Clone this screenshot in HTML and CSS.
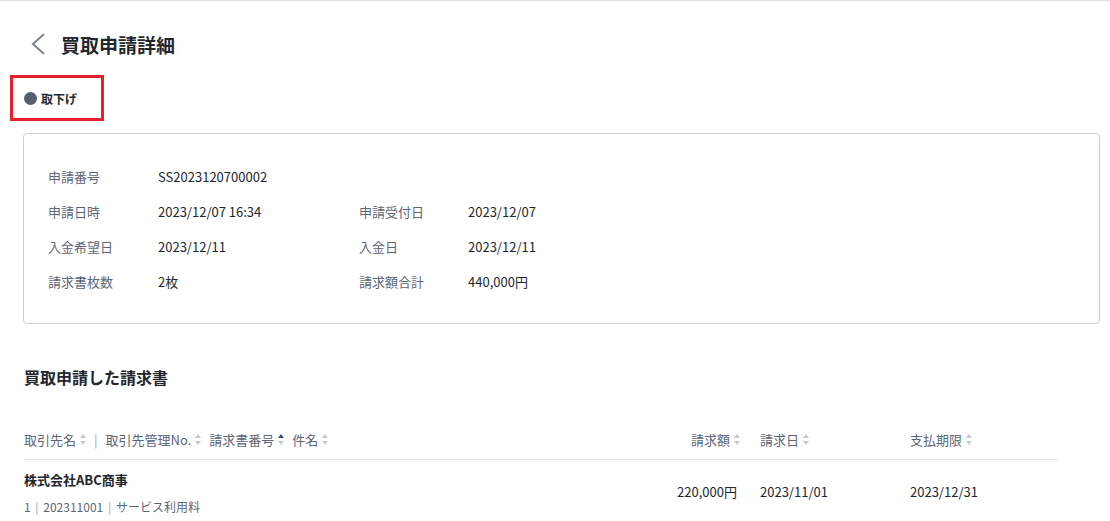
FILE: index.html
```html
<!DOCTYPE html>
<html lang="ja">
<head>
  <meta charset="UTF-8">
  <title>買取申請詳細</title>
  <link rel="stylesheet" href="styles.css">
</head>
<body>

  <div class="page">
    <div class="page-header">
      <a class="back" href="#">
        <svg width="16" height="24" viewBox="0 0 16 24"><polyline points="13,2 2,12 13,22" fill="none" stroke="#7b8695" stroke-width="2"/></svg>
      </a>
      <h1>買取申請詳細</h1>
    </div>

    <div class="status-mark">
      <span class="dot"></span>
      <span class="status-text">取下げ</span>
    </div>

    <div class="card">
      <div class="info-grid">
        <div class="label">申請番号</div>
        <div class="value">SS2023120700002</div>
        <div class="label"></div>
        <div class="value"></div>

        <div class="label">申請日時</div>
        <div class="value">2023/12/07 16:34</div>
        <div class="label">申請受付日</div>
        <div class="value">2023/12/07</div>

        <div class="label">入金希望日</div>
        <div class="value">2023/12/11</div>
        <div class="label">入金日</div>
        <div class="value">2023/12/11</div>

        <div class="label">請求書枚数</div>
        <div class="value">2枚</div>
        <div class="label">請求額合計</div>
        <div class="value">440,000円</div>
      </div>
    </div>

    <h2>買取申請した請求書</h2>

    <div class="invoice-table">
      <div class="row head">
        <div class="cell">
          <span class="sort">取引先名 <svg class="arrows" width="6" height="11" viewBox="0 0 6 11"><polygon points="0,4 3,0 6,4"/><polygon points="0,7 3,11 6,7"/></svg></span>
          <span class="sep">|</span>
          <span class="sort">取引先管理No. <svg class="arrows" width="6" height="11" viewBox="0 0 6 11"><polygon points="0,4 3,0 6,4"/><polygon points="0,7 3,11 6,7"/></svg></span>
          <span class="sort">請求書番号 <svg class="arrows" width="6" height="11" viewBox="0 0 6 11"><polygon class="on" points="0,4 3,0 6,4"/><polygon points="0,7 3,11 6,7"/></svg></span>
          <span class="sort">件名 <svg class="arrows" width="6" height="11" viewBox="0 0 6 11"><polygon points="0,4 3,0 6,4"/><polygon points="0,7 3,11 6,7"/></svg></span>
        </div>
        <div class="cell num">
          <span class="sort">請求額 <svg class="arrows" width="6" height="11" viewBox="0 0 6 11"><polygon points="0,4 3,0 6,4"/><polygon points="0,7 3,11 6,7"/></svg></span>
        </div>
        <div class="cell date">
          <span class="sort">請求日 <svg class="arrows" width="6" height="11" viewBox="0 0 6 11"><polygon points="0,4 3,0 6,4"/><polygon points="0,7 3,11 6,7"/></svg></span>
        </div>
        <div class="cell date">
          <span class="sort">支払期限 <svg class="arrows" width="6" height="11" viewBox="0 0 6 11"><polygon points="0,4 3,0 6,4"/><polygon points="0,7 3,11 6,7"/></svg></span>
        </div>
      </div>

      <div class="row item">
        <div class="cell">
          <div class="company">株式会社ABC商事</div>
          <div class="sub">1 <span class="sep">|</span> 202311001 <span class="sep">|</span> サービス利用料</div>
        </div>
        <div class="cell num">220,000円</div>
        <div class="cell date">2023/11/01</div>
        <div class="cell date">2023/12/31</div>
      </div>
    </div>
  </div>

</body>
</html>
```

FILE: styles.css
```css
:root {
  --text: #22262d;
  --muted: #5d6676;
  --line: #dde1e8;
  --card-border: #c9ced7;
}

body {
  margin: 0;
  font-family: "Noto Sans CJK JP", "Noto Sans", sans-serif;
  color: var(--text);
  background: #ffffff;
  border-top: 1px solid var(--line);
}

.page {
  padding: 0 10px 0 23px;
}

.page-header {
  display: flex;
  align-items: center;
  height: 30px;
  margin-top: 28px;
}

.back {
  display: flex;
  margin-left: 8px;
  margin-right: 14px;
}

h1 {
  margin: 0;
  font-size: 19px;
  font-weight: 700;
}

.status-mark {
  display: inline-flex;
  align-items: center;
  gap: 4px;
  box-sizing: border-box;
  width: 94px;
  height: 46px;
  margin: 16px 0 0 -13px;
  padding-left: 11px;
  border: 3px solid #e8202a;
}

.dot {
  width: 13px;
  height: 13px;
  border-radius: 50%;
  background: #535e6e;
}

.status-text {
  font-size: 12px;
  font-weight: 700;
}

.card {
  margin-top: 12px;
  border: 1px solid var(--card-border);
  border-radius: 4px;
  padding: 25px 24px 24px;
}

.info-grid {
  display: grid;
  grid-template-columns: 110px 201px 109px 1fr;
  grid-auto-rows: 35px;
  align-items: center;
  font-size: 13px;
}

.label {
  color: var(--muted);
}

.value {
  color: var(--text);
}

h2 {
  margin: 41px 0 0 1px;
  font-size: 16px;
  font-weight: 700;
  line-height: 24px;
}

.invoice-table {
  width: 1034px;
  margin-top: 30px;
  margin-left: 1px;
}

.row {
  display: grid;
  grid-template-columns: 1fr 96px 150px 168px;
}

.row.head {
  height: 40px;
  align-items: center;
  border-bottom: 1px solid var(--line);
  font-size: 13px;
  color: var(--muted);
}

.row.head .cell {
  display: flex;
  align-items: center;
}

.sort {
  display: inline-flex;
  align-items: center;
  gap: 4px;
  margin-right: 8px;
}

.arrows polygon {
  fill: #c3c9d3;
}

.arrows polygon.on {
  fill: #2c4a93;
}

.sep {
  color: #a9a2b6;
  margin-right: 8px;
}

.cell.num {
  justify-content: flex-end;
  text-align: right;
}

.row.head .cell.num .sort {
  margin-right: 0;
}

.cell.date {
  padding-left: 20px;
}

.row.item {
  align-items: center;
  padding-top: 8px;
  font-size: 13px;
}

.row.item .cell.num {
  padding-right: 3px;
}

.company {
  font-size: 13px;
  font-weight: 700;
  line-height: 24px;
}

.sub {
  margin-top: 6px;
  font-size: 12px;
  color: var(--muted);
}

.sub .sep {
  margin: 0 2px;
}
```
